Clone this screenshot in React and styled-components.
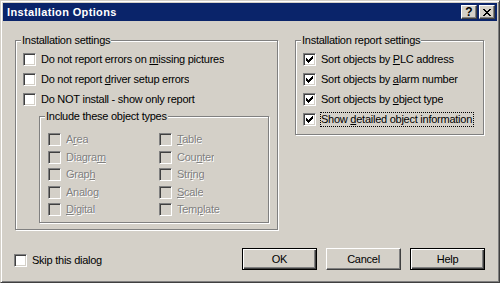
import React from 'react';
import styled, { createGlobalStyle } from 'styled-components';

const GlobalStyle = createGlobalStyle`
  html, body {
    margin: 0;
    padding: 0;
    background: #d4d0c8;
  }
  body {
    font-family: "Liberation Sans", Arial, sans-serif;
    font-size: 11px;
    letter-spacing: -0.25px;
    color: #000;
  }
`;

const Window = styled.div`
  box-sizing: border-box;
  width: 500px;
  height: 283px;
  padding: 2px;
  border: 1px solid;
  border-color: #d4d0c8 #404040 #404040 #d4d0c8;
  box-shadow: inset 1px 1px #fff, inset -1px -1px #808080;
  background: #d4d0c8;
  display: flex;
  flex-direction: column;
`;

const TitleBar = styled.div`
  height: 18px;
  background: #0a246a;
  display: flex;
  align-items: center;
  padding: 0 2px;
  gap: 2px;
`;

const Title = styled.div`
  flex: 1;
  color: #fff;
  font-weight: bold;
  letter-spacing: 0.35px;
  line-height: 18px;
  padding-left: 2px;
`;

const CaptionButton = styled.div`
  box-sizing: border-box;
  width: 16px;
  height: 14px;
  background: #d4d0c8;
  border: 1px solid;
  border-color: #fff #404040 #404040 #fff;
  box-shadow: inset -1px -1px #808080;
  display: flex;
  align-items: center;
  justify-content: center;
  font-weight: bold;
  font-size: 12px;
  line-height: 12px;
  letter-spacing: 0;
`;

const Body = styled.div`
  flex: 1;
  display: flex;
  flex-direction: column;
  padding-top: 19px;
`;

const GroupsRow = styled.div`
  display: flex;
  align-items: flex-start;
  gap: 17px;
  padding: 0 12px;
`;

const Group = styled.div`
  position: relative;
  box-sizing: border-box;
  width: ${p => p.$w}px;
  height: ${p => p.$h}px;
  margin-top: ${p => p.$mt || 0}px;
  margin-left: ${p => p.$ml || 0}px;
  padding: ${p => p.$pad};
  border: 1px solid #808080;
  box-shadow: inset 1px 1px #fff, 1px 1px #fff;
`;

const Legend = styled.span`
  position: absolute;
  top: -7px;
  left: 5px;
  padding: 0 1px;
  line-height: 13px;
  background: #d4d0c8;
  white-space: nowrap;
`;

const CheckRow = styled.div`
  display: flex;
  align-items: flex-start;
  height: ${p => p.$h || 20}px;
`;

const Box = styled.span`
  box-sizing: border-box;
  flex: none;
  position: relative;
  width: 13px;
  height: 13px;
  margin-top: 1px;
  border: 1px solid;
  border-color: #808080 #fff #fff #808080;
  box-shadow: inset 1px 1px #404040, inset -1px -1px #d4d0c8;
  background: ${p => (p.$disabled ? '#d4d0c8' : '#fff')};
  svg {
    position: absolute;
    left: 2px;
    top: 2px;
  }
`;

const Label = styled.span`
  box-sizing: border-box;
  margin-left: 4px;
  border: 1px ${p => (p.$focus ? 'dotted #000' : 'solid transparent')};
  line-height: 13px;
  white-space: nowrap;
  overflow: hidden;
  width: ${p => (p.$w ? `${p.$w}px` : 'auto')};
  color: ${p => (p.$disabled ? '#808080' : '#000')};
  text-shadow: ${p => (p.$disabled ? '1px 1px 0 #fff' : 'none')};
`;

const TypeGrid = styled.div`
  display: grid;
  grid-template-columns: 111px 111px;
  grid-template-rows: repeat(5, 17.5px);
  grid-auto-flow: column;
`;

const Footer = styled.div`
  display: flex;
  justify-content: space-between;
  align-items: flex-start;
  margin-top: 18px;
  padding: 0 12px 0 11px;
`;

const SkipRow = styled(CheckRow)`
  margin-top: 5px;
`;

const Buttons = styled.div`
  display: flex;
  gap: 9px;
`;

const Button = styled.div`
  box-sizing: border-box;
  width: 75px;
  height: 22px;
  display: flex;
  align-items: center;
  justify-content: center;
  background: #d4d0c8;
  border: 1px solid;
  border-color: ${p => (p.$default ? '#000' : '#fff #404040 #404040 #fff')};
  box-shadow: ${p =>
    p.$default
      ? 'inset 1px 1px #fff, inset -1px -1px #404040, inset -2px -2px #808080'
      : 'inset -1px -1px #808080'};
`;

const CheckMark = ({ color }) => (
  <svg width="7" height="7" viewBox="0 0 7 7" shapeRendering="crispEdges" fill={color}>
    <rect x="6" y="0" width="1" height="1" />
    <rect x="5" y="1" width="2" height="1" />
    <rect x="0" y="2" width="1" height="1" />
    <rect x="4" y="2" width="3" height="1" />
    <rect x="0" y="3" width="2" height="1" />
    <rect x="3" y="3" width="3" height="1" />
    <rect x="0" y="4" width="5" height="1" />
    <rect x="1" y="5" width="3" height="1" />
    <rect x="2" y="6" width="1" height="1" />
  </svg>
);

const CloseGlyph = () => (
  <svg width="8" height="7" viewBox="0 0 8 7" shapeRendering="crispEdges" fill="#000">
    <rect x="0" y="0" width="2" height="1" />
    <rect x="6" y="0" width="2" height="1" />
    <rect x="1" y="1" width="2" height="1" />
    <rect x="5" y="1" width="2" height="1" />
    <rect x="2" y="2" width="4" height="1" />
    <rect x="3" y="3" width="2" height="1" />
    <rect x="2" y="4" width="4" height="1" />
    <rect x="1" y="5" width="2" height="1" />
    <rect x="5" y="5" width="2" height="1" />
    <rect x="0" y="6" width="2" height="1" />
    <rect x="6" y="6" width="2" height="1" />
  </svg>
);

const Check = ({ checked, disabled, focus, width, h, children }) => (
  <CheckRow $h={h}>
    <Box $disabled={disabled}>{checked && <CheckMark color={disabled ? '#808080' : '#000'} />}</Box>
    <Label $disabled={disabled} $focus={focus} $w={width}>
      {children}
    </Label>
  </CheckRow>
);

const objectTypes = [
  ['A', 'r', 'ea'],
  ['Diagra', 'm', ''],
  ['Grap', 'h', ''],
  ['Analo', 'g', ''],
  ['', 'D', 'igital'],
  ['', 'T', 'able'],
  ['Cou', 'n', 'ter'],
  ['Str', 'i', 'ng'],
  ['', 'S', 'cale'],
  ['Tem', 'p', 'late'],
];

export default function App() {
  return (
    <>
      <GlobalStyle />
      <Window>
        <TitleBar>
          <Title>Installation Options</Title>
          <CaptionButton>?</CaptionButton>
          <CaptionButton>
            <CloseGlyph />
          </CaptionButton>
        </TitleBar>
        <Body>
          <GroupsRow>
            <Group $w={263} $h={190} $pad="11px 0 0 7px">
              <Legend>Installation settings</Legend>
              <Check>
                Do not report errors on <u>m</u>issing pictures
              </Check>
              <Check>
                Do not report <u>d</u>river setup errors
              </Check>
              <Check>Do NOT install - show only report</Check>
              <Group $w={230} $h={107} $mt={4} $ml={16} $pad="15px 0 0 8px">
                <Legend>Include these object types</Legend>
                <TypeGrid>
                  {objectTypes.map(([a, k, b]) => (
                    <Check key={a + k + b} disabled h={17.5}>
                      {a}
                      <u>{k}</u>
                      {b}
                    </Check>
                  ))}
                </TypeGrid>
              </Group>
            </Group>
            <Group $w={189} $h={95} $pad="11px 0 0 7px">
              <Legend>Installation report settings</Legend>
              <Check checked>
                Sort objects by <u>P</u>LC address
              </Check>
              <Check checked>
                Sort objects by <u>a</u>larm number
              </Check>
              <Check checked>
                Sort objects by <u>o</u>bject type
              </Check>
              <Check checked focus width={154}>
                Show <u>d</u>etailed object information
              </Check>
            </Group>
          </GroupsRow>
          <Footer>
            <SkipRow>
              <Box />
              <Label>Skip this dialog</Label>
            </SkipRow>
            <Buttons>
              <Button $default>OK</Button>
              <Button>Cancel</Button>
              <Button $default>Help</Button>
            </Buttons>
          </Footer>
        </Body>
      </Window>
    </>
  );
}
